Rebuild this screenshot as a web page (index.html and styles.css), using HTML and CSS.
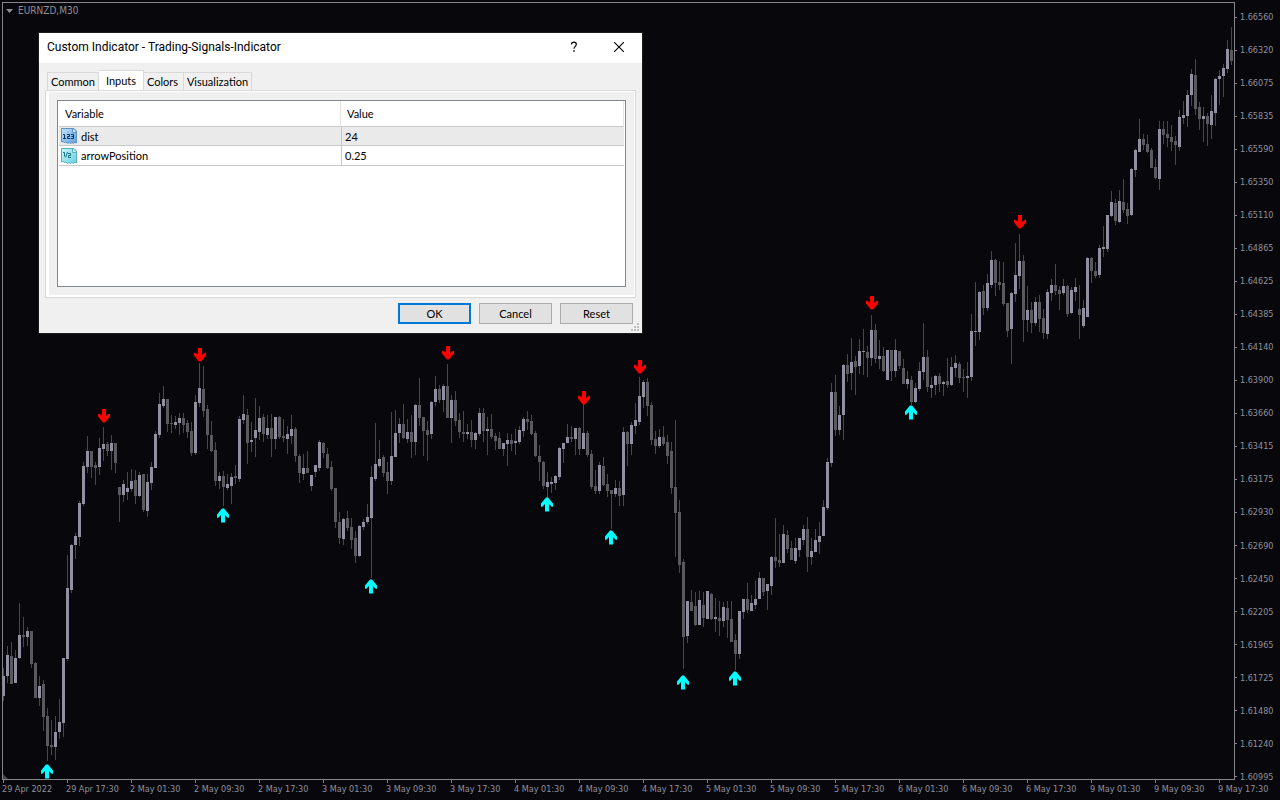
FILE: index.html
```
<!DOCTYPE html>
<html lang="en">
<head>
  <meta charset="UTF-8">
  <title>EURNZD,M30</title>
  <meta name="viewport" content="width=device-width, initial-scale=1.0">
  <link rel="stylesheet" href="styles.css">
</head>
<body>
  <main class="terminal">
    <section class="plot">
      <svg class="candles" id="candles" viewBox="3 3 1231 776" preserveAspectRatio="none" role="img" aria-label="EURNZD M30 candles"></svg>
      <h1 class="symbol">
        <svg width="7" height="4" viewBox="0 0 7 4"><path d="M0 0H7L3.5 4Z" fill="#90909a"/></svg>
        EURNZD,M30
      </h1>
    </section>
    <ol class="price-axis" id="price-axis"></ol>
    <ol class="time-axis" id="time-axis"></ol>
  </main>

  <div class="dialog" role="dialog" aria-labelledby="dialog-title">
    <header class="title-bar">
      <h2 id="dialog-title">Custom Indicator - Trading-Signals-Indicator</h2>
      <button class="caption-btn" aria-label="Help">
        <svg width="8" height="12" viewBox="0 0 8 12"><path d="M1.5 3.4C1.5 .4 6.3 .5 6.3 3.3C6.3 5.3 4 5.4 4 7.8" fill="none" stroke="#000" stroke-width="1.2"/><rect x="3.3" y="9.2" width="1.4" height="1.5"/></svg>
      </button>
      <button class="caption-btn" aria-label="Close">
        <svg width="10" height="10" viewBox="0 0 10 10"><path d="M0 0L10 10M10 0L0 10" stroke="#000" stroke-width="1.1"/></svg>
      </button>
    </header>

    <div class="dialog-body">
      <nav class="tabs" role="tablist">
        <button class="tab tab-common" role="tab">Common</button>
        <button class="tab tab-inputs active" role="tab" aria-selected="true">Inputs</button>
        <button class="tab tab-colors" role="tab">Colors</button>
        <button class="tab tab-visual" role="tab">Visualization</button>
      </nav>
      <div class="panel" role="tabpanel">
        <div class="grid-box">
          <table class="inputs">
            <thead>
              <tr><th>Variable</th><th>Value</th></tr>
            </thead>
            <tbody>
              <tr class="selected">
                <td>
                  <div class="variable">
                    <svg width="16" height="16" viewBox="0 0 16 16">
                      <defs><linearGradient id="blue" x1="0" y1="0" x2="1" y2="1"><stop offset="0" stop-color="#c4e2fb"/><stop offset="1" stop-color="#5c9fdc"/></linearGradient></defs>
                      <path d="M.5 .5H13L15.5 3V15L14 14L12.5 15.5L11 14.5L9.5 15.5L8 14.5L6.5 15.5L5 14L3.5 14.5L2 13.5L.5 14Z" fill="url(#blue)" stroke="#5f93c6"/>
                      <path d="M11.5 1V4.5H15" fill="#e2f1fd" stroke="#5f93c6"/>
                      <path d="M2 6.5H3.5V10.5M2 10.5H5M6 6.5H8.5V8.5H6.5V10.5H9M10 6.5H12.5V10.5H10M10.5 8.5H12.5" fill="none" stroke="#0b3767"/>
                    </svg>
                    dist
                  </div>
                </td>
                <td>24</td>
              </tr>
              <tr>
                <td>
                  <div class="variable">
                    <svg width="16" height="16" viewBox="0 0 16 16">
                      <defs><linearGradient id="teal" x1="0" y1="0" x2="1" y2="1"><stop offset="0" stop-color="#c6f8fc"/><stop offset="1" stop-color="#68cfdf"/></linearGradient></defs>
                      <path d="M.5 .5H13L15.5 3V15L14 14L12.5 15.5L11 14.5L9.5 15.5L8 14.5L6.5 15.5L5 14L3.5 14.5L2 13.5L.5 14Z" fill="url(#teal)" stroke="#5cb0bb"/>
                      <path d="M11.5 1V4.5H15" fill="#e2fbfd" stroke="#5cb0bb"/>
                      <path d="M2 4.5H3.5V8.5M6.5 4L4.5 9.5M7 5.5H9.5V7.5H7.5V9.5H10" fill="none" stroke="#1c7584"/>
                    </svg>
                    arrowPosition
                  </div>
                </td>
                <td>0.25</td>
              </tr>
            </tbody>
          </table>
        </div>
      </div>
      <footer class="actions">
        <button class="btn default">OK</button>
        <button class="btn">Cancel</button>
        <button class="btn">Reset</button>
      </footer>
    </div>
    <svg class="grip" width="8" height="8" viewBox="0 0 8 8"><path d="M6 0h2v2h-2zM3 3h2v2h-2zM6 3h2v2h-2zM0 6h2v2h-2zM3 6h2v2h-2zM6 6h2v2h-2z" fill="#bfbfbf"/></svg>
  </div>

  <script src="chart.js"></script>
</body>
</html>
```
FILE: styles.css
```
* { box-sizing: border-box; }
body {
  margin: 0;
  background: #08080c;
  font-family: Lato, sans-serif;
  font-size: 11px;
  color: #000;
}
h1, h2, ol { margin: 0; padding: 0; font-weight: normal; list-style: none; }
button { font: inherit; color: inherit; margin: 0; padding: 0; border: 0; background: none; }
svg { display: block; flex: none; }

/* chart */
.terminal {
  display: grid;
  grid-template-columns: 1fr 45px;
  grid-template-rows: 1fr 20px;
  height: 100vh;
  padding: 2px 0 0 2px;
  overflow: hidden;
  font-family: "DejaVu Sans Condensed", "Noto Sans", sans-serif;
  font-size: 9px;
  line-height: 12px;
  color: #90909a;
}
.plot {
  position: relative;
  border: 1px solid #85858d;
  overflow: hidden;
}
.candles { width: 100%; height: 100%; }
.candle-up { fill: #9090a0; }
.candle-down { fill: #5a5a5e; }
.wick { fill: #48484c; }
.signal-up { fill: #00ffff; }
.signal-down { fill: #ff0000; }
.corner { fill: #44444c; }
.symbol {
  position: absolute;
  top: 2px;
  left: 3px;
  display: flex;
  align-items: center;
  gap: 5px;
  font-size: 10px;
  line-height: 12px;
}
.price-axis {
  display: flex;
  flex-direction: column;
  justify-content: space-between;
  padding-top: 9px;
  margin-bottom: -3px;
}
.price-axis li { display: flex; align-items: center; gap: 3px; }
.price-axis li::before { content: ""; width: 2px; height: 1px; background: #85858d; }
.time-axis {
  grid-column: 1 / -1;
  display: flex;
}
.time-axis li { flex: 0 0 calc(64 / 1278 * 100%); white-space: nowrap; }
.time-axis li::before { content: ""; display: block; width: 1px; height: 3px; margin-left: 1px; background: #85858d; }

/* indicator dialog */
.dialog {
  position: absolute;
  top: 33px;
  left: 39px;
  width: 603px;
  background: #f0f0f0;
  outline: 1px solid #1c1c1c;
}
.title-bar {
  display: flex;
  align-items: center;
  height: 30px;
  padding: 0 1px 2px 8px;
  background: #fff;
}
.title-bar h2 { flex: 1; font-family: Roboto, sans-serif; font-size: 12px; }
.caption-btn { display: grid; place-items: center; width: 45px; height: 28px; }
.dialog-body { padding: 7px 6px 9px; }
.tabs { display: flex; align-items: flex-end; height: 20px; padding-left: 2px; }
.tab {
  height: 18px;
  border: 1px solid #d9d9d9;
  border-width: 1px 1px 0 0;
}
.tab-common { width: 52px; border-left-width: 1px; }
.tab-inputs { width: 45px; }
.tab-colors { width: 40px; padding-right: 2px; }
.tab-visual { width: 68px; }
.tab.active { height: 20px; background: #fff; }
.panel {
  border: 1px solid #d9d9d9;
  background: #f0f0f0;
  box-shadow: inset 3px 0 #fff, inset -1px 0 #fff, inset 0 1px #fff, inset 0 -2px #fff;
  padding: 9px 9px 10px 11px;
}
.grid-box { height: 187px; padding: 0 1px; border: 1px solid #828790; background: #fff; }
.inputs { width: 100%; table-layout: fixed; border-collapse: separate; border-spacing: 0; }
.inputs th, .inputs td { padding: 0; text-align: left; font-weight: normal; border-bottom: 1px solid #c8c8c8; }
.inputs th { height: 26px; padding-left: 6px; border-right: 1px solid #e5e5e5; }
.inputs th:first-child { width: 282px; }
.inputs td { height: 20px; padding-left: 3px; border-left: 1px solid #c8c8c8; }
.inputs td:first-child { padding-left: 2px; border-left: 0; }
.inputs .selected td { height: 19px; background: #eaeaea; }
.variable { display: flex; align-items: center; gap: 4px; }
.actions { display: flex; justify-content: flex-end; gap: 8px; padding: 5px 3px 0 0; }
.btn { width: 73px; height: 21px; border: 1px solid #adadad; background: #e1e1e1; }
.btn.default { border: 2px solid #0078d7; }
.grip { position: absolute; right: 3px; bottom: 2px; }
```
FILE: chart.js
```
// one candle: direction (u/d) high,bodyTop,bodyBottom,low
const candles = `
u668,676,696,701 u646,655,676,683 d642,656,684,684 u650,658,683,683 u603,635,658,659 d617,635,637,647 u627,631,637,646 d631,631,664,668
d662,663,698,698 u676,686,698,706 d680,684,717,731 d708,716,746,761 d720,745,747,755 u716,732,747,760 u699,722,732,739 u658,658,723,737
u555,588,659,661 u544,545,590,593 u533,536,545,559 u501,503,537,546 u462,466,504,506 u436,451,467,473 d451,451,467,478 d462,465,468,485
u438,448,467,475 u427,444,449,461 d442,444,451,456 u435,443,451,470 d443,443,463,473 d487,487,495,522 u480,484,495,502 u472,488,492,500
u469,481,489,492 d470,480,496,504 u472,475,496,497 d474,474,510,512 u474,482,511,517 u462,467,483,490 u431,434,468,468 u393,404,435,438
u386,399,406,408 d399,399,424,432 d415,423,424,433 u416,422,425,429 u413,418,423,435 d413,418,425,433 d420,423,432,438 d422,431,453,456
u395,402,453,455 u363,388,403,407 d366,389,411,417 d405,409,435,449 d421,435,451,452 d442,450,481,486 u472,476,481,489 d471,476,487,506
u474,484,488,490 u473,477,486,504 d465,476,478,484 u416,419,479,482 u395,414,420,424 d409,415,443,464 u422,440,442,452 u398,430,438,457
u406,418,432,440 d414,417,434,442 u415,428,435,439 d414,428,439,457 u417,417,439,449 d416,417,437,439 d419,436,438,442 u426,434,439,454
u415,429,436,444 d427,429,456,462 d454,456,473,483 u454,468,474,480 d451,468,473,473 u475,475,486,491 u465,465,472,477 u440,442,468,471
d442,443,453,458 d448,454,468,469 d461,467,489,491 d488,488,522,528 d512,522,538,544 u518,519,539,545 d511,518,528,531 d518,527,540,549
d531,538,556,563 u525,526,556,557 u519,522,527,530 u504,517,522,524 u466,477,518,578 u423,464,479,481 u440,459,466,468 d455,457,473,477
d462,472,481,494 u412,456,481,485 u410,433,457,457 u418,424,433,443 d404,424,438,439 u419,432,439,443 d415,432,442,458 u404,405,442,455
d378,405,418,426 d417,417,431,456 d421,430,435,461 u401,402,434,439 u376,389,402,406 d385,389,400,403 u384,386,400,412 d364,386,418,418
u395,400,418,443 d391,400,421,426 d413,420,432,438 d411,432,434,442 u424,432,434,439 d420,432,440,447 u432,433,440,449 u408,413,434,436
d408,413,431,442 u417,429,431,455 d414,429,437,439 d433,436,441,450 d432,438,449,449 u443,443,449,456 u433,440,444,466 d434,440,444,451
u429,441,443,455 u426,430,442,444 u417,419,431,437 d411,419,422,430 d415,421,434,435 d431,433,456,457 d445,456,462,481 d461,462,486,489
u472,482,487,498 u477,482,484,493 u475,476,483,490 u447,448,477,480 u443,443,449,463 u424,437,443,443 d426,437,439,442 u428,428,439,455
d427,428,449,455 u404,433,449,449 d431,433,455,457 d450,454,487,489 d470,486,491,494 u462,465,491,494 d457,466,485,486 d474,484,491,497
d490,490,494,529 u480,488,494,497 d481,488,496,506 u427,432,495,506 d431,432,444,466 u422,425,444,455 u403,420,426,434 u377,396,422,425
u380,382,397,408 d378,382,406,416 d402,405,440,445 d431,439,446,454 u429,437,446,448 d426,437,444,446 d435,442,456,464 d442,451,488,494
d420,487,513,557 d500,512,565,573 d559,562,637,669 u601,601,636,643 d590,602,611,611 d592,606,625,626 u591,600,625,625 d592,605,618,627
u591,591,619,619 d593,594,619,620 u598,617,619,632 d601,618,621,636 u602,607,621,627 d601,608,620,638 d601,619,642,642 d634,640,654,670
u611,611,654,659 u599,599,612,619 d583,599,610,613 u595,603,611,611 u581,599,605,609 u572,578,599,599 d578,578,592,596 u584,584,591,610
u556,557,586,595 d518,557,561,568 d534,560,563,567 u525,534,563,563 d530,535,549,553 d541,548,560,560 u538,548,561,564 u538,538,550,557
u525,529,540,545 d517,529,557,572 u538,551,557,565 u529,540,552,552 u522,536,542,554 u500,507,536,536 u458,462,508,510 u383,392,463,467
d375,392,430,436 u406,415,430,435 u364,365,415,440 d354,365,374,382 u338,362,373,390 d356,361,367,395 u339,351,366,374 u329,351,352,375
d346,352,358,377 u315,330,358,366 d324,330,359,363 u340,356,359,369 d347,356,371,372 u350,350,380,380 d350,350,371,381 u339,350,371,377
d351,351,366,369 d359,368,384,384 u371,379,384,389 d376,380,402,405 u383,388,402,403 u362,371,389,391 u323,357,372,380 d350,357,387,392
u377,385,388,398 u375,376,385,395 d373,376,384,392 u381,382,384,396 d358,381,385,388 u357,367,385,386 u355,363,368,377 d362,364,378,383
d369,377,378,392 u362,376,378,398 u314,331,377,381 u282,331,332,346 u291,292,332,340 d285,291,308,315 u274,283,308,311 u251,260,285,288
d259,260,283,296 d261,282,285,290 d262,283,304,306 d303,303,331,337 u292,293,329,364 u243,275,294,302 u234,261,276,289 d255,261,320,342
u286,310,320,332 d302,310,323,333 u297,302,323,326 d295,302,319,332 d309,318,333,339 u289,292,334,339 u279,285,293,301 d264,285,291,295
d286,290,294,310 u279,286,293,295 d285,286,314,317 u287,290,313,314 u278,287,292,301 d285,309,315,339 u300,308,326,328 u257,258,317,317
d257,258,271,283 d262,271,276,278 u245,248,275,278 u226,247,249,257 u215,215,249,252 u191,202,216,217 d199,203,221,225 u190,201,222,223
d179,202,210,213 d203,209,216,224 u168,169,215,216 u149,150,170,177 u119,139,152,152 d134,139,145,150 d135,144,152,153 d148,150,168,168
d159,167,178,179 u121,129,179,190 d121,129,135,144 d121,134,138,147 d125,137,142,151 d136,141,145,165 u110,117,147,151 u101,115,118,124
u90,95,116,127 u69,74,95,106 d59,75,109,115 d102,107,119,130 u107,116,119,142 d113,116,124,146 u95,111,125,139 u78,79,113,126
u70,76,79,105 u64,68,76,97 u40,49,69,73 d27,50,61,65`.trim().split(/\s+/);

// [candle x, arrow top]
const sells = [[103, 409], [199, 348], [447, 346], [583, 391], [639, 360], [871, 296], [1019, 215]];
const buys = [[47, 764], [223, 508], [371, 579], [547, 497], [611, 530], [683, 675], [735, 671], [911, 405]];

const prices = ['1.66560', '1.66320', '1.66075', '1.65835', '1.65590', '1.65350', '1.65110', '1.64865',
  '1.64625', '1.64385', '1.64140', '1.63900', '1.63660', '1.63415', '1.63175', '1.62930',
  '1.62690', '1.62450', '1.62205', '1.61965', '1.61725', '1.61480', '1.61240', '1.60995'];

const times = ['29 Apr 2022', '29 Apr 17:30'];
for (const day of [2, 3, 4, 5, 6, 9]) {
  for (const hour of ['01:30', '09:30', '17:30']) times.push(`${day} May ${hour}`);
}

let svg = '';
candles.forEach((c, i) => {
  const x = 3 + i * 4;
  const [high, top, bottom, low] = c.slice(1).split(',').map(Number);
  const cls = c[0] === 'u' ? 'candle-up' : 'candle-down';
  svg += `<rect class="wick" x="${x}" y="${high}" width="1" height="${low - high}"/>`;
  svg += `<rect class="${cls}" x="${x - 1}" y="${top}" width="3" height="${bottom - top}"/>`;
});
for (const [x, y] of sells) {
  svg += `<path class="signal-down" transform="translate(${x + 1} ${y})" d="M-2 0H2V7L5 4.5L6 5V7.5L1 13.5H-1L-6 7.5V5L-5 4.5L-2 7Z"/>`;
}
for (const [x, y] of buys) {
  svg += `<path class="signal-up" transform="translate(${x} ${y})" d="M-2 14.5H2V7L5 10L6 9.5V6.5L1 .5H-1L-6 6.5V9.5L-5 10L-2 7Z"/>`;
}
svg += '<path class="corner" d="M3 774L8 779H3Z"/>';

document.getElementById('candles').innerHTML = svg;
document.getElementById('price-axis').innerHTML = prices.map(p => `<li>${p}</li>`).join('');
document.getElementById('time-axis').innerHTML = times.map(t => `<li>${t}</li>`).join('');
```
